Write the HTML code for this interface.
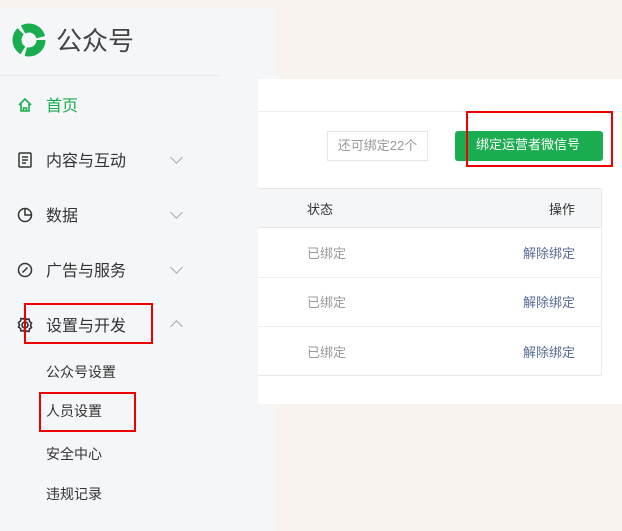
<!DOCTYPE html>
<html><head><meta charset="utf-8"><style>
*{margin:0;padding:0;box-sizing:border-box}
body{width:622px;height:531px;overflow:hidden;background:#f8f3ee;font-family:"Liberation Sans","Noto Sans CJK SC",sans-serif;position:relative}
.a{position:absolute}
.side{left:0;top:8px;width:275px;height:523px;background:#f4f6f8}
.t{position:absolute;font-size:16px;color:#333;white-space:nowrap}
.s{position:absolute;font-size:14px;color:#333;white-space:nowrap;left:46px}
.chev{position:absolute;left:172px;width:9px;height:9px;border-right:1.3px solid #aaa;border-bottom:1.3px solid #aaa;transform:rotate(45deg)}
.red{position:absolute;border:2.5px solid #e00}
.g{font-size:13px;color:#999;position:absolute;left:307px}
.l{font-size:13px;color:#576b95;position:absolute;left:523px}
</style></head><body>
<div class="a side"></div>
<svg class="a" style="left:11px;top:23px" width="36" height="34" viewBox="0 0 36 34"><circle cx="18" cy="17" r="12" fill="none" stroke="#1aad4f" stroke-width="9" stroke-dasharray="22 3"/></svg>
<div class="t" style="left:56px;top:21px;font-size:26px;color:#444">公众号</div>
<div class="a" style="left:0;top:75px;width:220px;height:1px;background:#e8eaec"></div>
<svg class="a" style="left:17px;top:97px" width="16" height="16" viewBox="0 0 16 16" fill="none" stroke="#1aad4f" stroke-width="1.6"><path d="M2 8L8 2l6 6M4 7v7h8V7M6.5 14v-3h3v3"/></svg>
<div class="t" style="left:46px;top:92px;color:#1aad4f">首页</div>
<svg class="a" style="left:18px;top:152px" width="14" height="16" viewBox="0 0 14 16" fill="none" stroke="#333" stroke-width="1.5"><rect x="1" y="1" width="12" height="14" rx="1"/><path d="M4 5h6M4 8h6M4 11h4"/></svg>
<div class="t" style="left:46px;top:147px">内容与互动</div><div class="chev" style="top:153px"></div>
<svg class="a" style="left:17px;top:207px" width="16" height="16" viewBox="0 0 16 16" fill="none" stroke="#333" stroke-width="1.5"><circle cx="8" cy="8" r="6.5"/><path d="M8 1.5V8h6.5"/></svg>
<div class="t" style="left:46px;top:202px">数据</div><div class="chev" style="top:208px"></div>
<svg class="a" style="left:17px;top:262px" width="16" height="16" viewBox="0 0 16 16" fill="none" stroke="#333" stroke-width="1.5"><circle cx="8" cy="8" r="6.5"/><path d="M10.5 5.5L7 9 5.5 10.5"/></svg>
<div class="t" style="left:46px;top:257px">广告与服务</div><div class="chev" style="top:263px"></div>
<svg class="a" style="left:16px;top:316px" width="18" height="18" viewBox="0 0 18 18" fill="none" stroke="#333" stroke-width="1.6"><circle cx="9" cy="9" r="3"/><path d="M9 1.5l1.5 2 2.5-.5.5 2.5 2 1.5-1 2.5 1 2-2 1.5-.5 2.5-2.5-.5L9 16.5l-1.5-2-2.5.5-.5-2.5-2-1.5 1-2-1-2.5 2-1.5.5-2.5 2.5.5z"/></svg>
<div class="t" style="left:46px;top:312px">设置与开发</div>
<div class="chev" style="top:322px;transform:rotate(225deg)"></div>
<div class="s" style="top:362px">公众号设置</div>
<div class="s" style="top:401px">人员设置</div>
<div class="s" style="top:444px">安全中心</div>
<div class="s" style="top:484px">违规记录</div>
<div class="red" style="left:24px;top:303px;width:129px;height:41px"></div>
<div class="red" style="left:39px;top:392px;width:97px;height:40px"></div>

<div class="a" style="left:258px;top:79px;width:364px;height:325px;background:#fff"></div>
<div class="a" style="left:258px;top:111px;width:364px;height:1px;background:#eee"></div>
<div class="a" style="left:327px;top:131px;width:101px;height:30px;border:1px solid #e6e6e6;background:#fff;font-size:13px;color:#999;text-align:center;line-height:27px">还可绑定22个</div>
<div class="a" style="left:455px;top:131px;width:148px;height:30px;background:#1aad4f;border-radius:3px;color:#fff;font-size:13px;line-height:28px;padding-left:21px">绑定运营者微信号</div>
<div class="red" style="left:466px;top:111px;width:147px;height:56px"></div>
<div class="a" style="left:258px;top:188px;width:344px;height:188px;border:1px solid #e6e8eb;border-left:none"></div>
<div class="a" style="left:258px;top:189px;width:343px;height:39px;background:#f5f6f8;border-bottom:1px solid #e6e8eb"></div>
<div class="a" style="left:307px;top:199px;font-size:13px;color:#333">状态</div>
<div class="a" style="left:549px;top:199px;font-size:13px;color:#333">操作</div>
<div class="a" style="left:258px;top:277px;width:343px;height:1px;background:#eceef0"></div>
<div class="a" style="left:258px;top:326px;width:343px;height:1px;background:#eceef0"></div>
<div class="g" style="top:243px">已绑定</div><div class="l" style="top:243px">解除绑定</div>
<div class="g" style="top:292px">已绑定</div><div class="l" style="top:292px">解除绑定</div>
<div class="g" style="top:342px">已绑定</div><div class="l" style="top:342px">解除绑定</div>
</body></html>
